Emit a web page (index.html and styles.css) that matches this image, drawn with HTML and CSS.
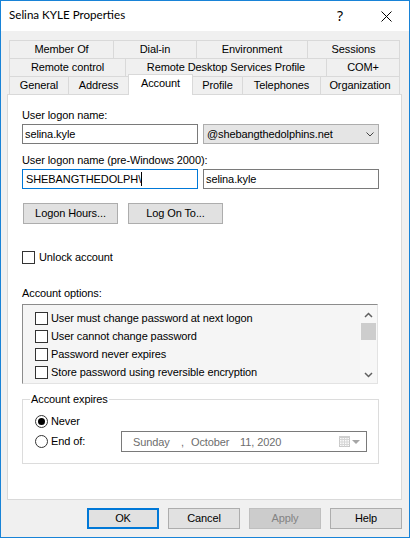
FILE: index.html
```html
<!DOCTYPE html>
<html>
<head>
<meta charset="utf-8">
<link rel="stylesheet" href="styles.css">
</head>
<body>
<div class="window">
  <div class="titlebar">
    <span class="title">Selina KYLE Properties</span>
    <span class="capbtn help-q">?</span>
    <span class="capbtn close"><svg width="11" height="11" viewBox="0 0 11 11"><path d="M0.5,0.5 L10.5,10.5 M10.5,0.5 L0.5,10.5" stroke="#000" stroke-width="1" fill="none"/></svg></span>
  </div>
  <div class="body">
    <div class="tabs">
      <div class="tabrow row1">
        <div class="tab">Member Of</div>
        <div class="tab">Dial-in</div>
        <div class="tab">Environment</div>
        <div class="tab">Sessions</div>
      </div>
      <div class="tabrow row2">
        <div class="tab">Remote control</div>
        <div class="tab">Remote Desktop Services Profile</div>
        <div class="tab">COM+</div>
      </div>
      <div class="tabrow row3">
        <div class="tab">General</div>
        <div class="tab">Address</div>
        <div class="tab active">Account</div>
        <div class="tab">Profile</div>
        <div class="tab">Telephones</div>
        <div class="tab">Organization</div>
      </div>
    </div>
    <div class="panel">
      <div class="label first">User logon name:</div>
      <div class="fieldrow">
        <div class="textbox">selina.kyle</div>
        <div class="combo"><span>@shebangthedolphins.net</span><svg width="8" height="5" viewBox="0 0 8 5"><polyline points="0.5,0.5 4,4 7.5,0.5" fill="none" stroke="#444" stroke-width="1"/></svg></div>
      </div>
      <div class="label">User logon name (pre-Windows 2000):</div>
      <div class="fieldrow">
        <div class="textbox focused">SHEBANGTHEDOLPH\<span class="caret"></span></div>
        <div class="textbox">selina.kyle</div>
      </div>
      <div class="btnrow">
        <div class="btn">Logon Hours...</div>
        <div class="btn">Log On To...</div>
      </div>
      <div class="check unlock"><span class="box"></span><span>Unlock account</span></div>
      <div class="label options">Account options:</div>
      <div class="listbox">
        <div class="items">
          <div class="item"><span class="box"></span><span>User must change password at next logon</span></div>
          <div class="item"><span class="box"></span><span>User cannot change password</span></div>
          <div class="item"><span class="box"></span><span>Password never expires</span></div>
          <div class="item"><span class="box"></span><span>Store password using reversible encryption</span></div>
        </div>
        <div class="scrollbar">
          <div class="sb-arrow up"><svg width="9" height="6" viewBox="0 0 9 6"><polyline points="1,5 4.5,1.5 8,5" fill="none" stroke="#606060" stroke-width="1.5"/></svg></div>
          <div class="sb-thumb"></div>
          <div class="sb-space"></div>
          <div class="sb-arrow down"><svg width="9" height="6" viewBox="0 0 9 6"><polyline points="1,1 4.5,4.5 8,1" fill="none" stroke="#606060" stroke-width="1.5"/></svg></div>
        </div>
      </div>
      <div class="group">
        <div class="legend">Account expires</div>
        <div class="radiorow never">
          <div class="radio"><span class="circle checked"><span class="dot"></span></span><span>Never</span></div>
        </div>
        <div class="radiorow endrow">
          <div class="radio endof"><span class="circle"></span><span>End of:</span></div>
          <div class="datepicker">
            <span class="seg sun">Sunday</span>
            <span class="seg comma">,</span>
            <span class="seg oct">October</span>
            <span class="seg">11, 2020</span>
            <svg class="cal" width="22" height="12" viewBox="0 0 22 12">
              <rect x="0.5" y="0.5" width="10" height="10" fill="#fafafa" stroke="#c8c8c8"/>
              <path d="M0.5,3.5 H10.5 M0.5,6 H10.5 M0.5,8.5 H10.5 M3,0.5 V10.5 M5.5,0.5 V10.5 M8,0.5 V10.5" stroke="#d6d6d6" stroke-width="1" fill="none"/>
              <rect x="0" y="0" width="11" height="2" fill="#cfcfcf"/>
              <polygon points="13,4 21,4 17,8" fill="#a6a6a6"/>
            </svg>
          </div>
        </div>
      </div>
    </div>
    <div class="buttons">
      <div class="dbtn ok">OK</div>
      <div class="dbtn">Cancel</div>
      <div class="dbtn apply">Apply</div>
      <div class="dbtn">Help</div>
    </div>
  </div>
</div>
</body>
</html>
```

FILE: styles.css
```css
html, body {
  margin: 0;
  padding: 0;
  background: #ffffff;
}
body {
  font-family: "Liberation Sans", Arial, sans-serif;
  font-size: 11px;
  letter-spacing: -0.1px;
  color: #000;
}
.window {
  width: 410px;
  height: 538px;
  box-sizing: border-box;
  border: 1px solid #1883d7;
  background: #f0f0f0;
  display: flex;
  flex-direction: column;
}
.titlebar {
  height: 30px;
  flex: none;
  background: #fff;
  display: flex;
  align-items: center;
}
.title {
  flex: 1;
  margin-left: 8px;
  font-family: "Lato", "Noto Sans", sans-serif;
  font-size: 11.6px;
  letter-spacing: 0;
  line-height: 16px;
  padding-bottom: 2px;
}
.capbtn {
  width: 46px;
  height: 30px;
  display: flex;
  align-items: center;
  justify-content: center;
}
.help-q {
  font-family: "Noto Sans", sans-serif;
  font-size: 14px;
  padding-bottom: 1px;
  box-sizing: border-box;
}
.close svg {
  display: block;
  margin-left: 1px;
}
.body {
  flex: 1;
  padding: 9px 7px 0 6px;
}
.tabs {
  margin: 0 2px 0 2px;
}
.tabrow {
  display: grid;
  height: 18px;
}
.row1 { grid-template-columns: 105px 83px 111px 92px; }
.row2 { grid-template-columns: 117px 201px 73px; }
.row3 { grid-template-columns: 60px 60px 64px 50px 78px 79px; }
.tab {
  border-style: solid;
  border-color: #d9d9d9;
  border-width: 1px 1px 0 0;
  text-align: center;
  line-height: 17px;
  white-space: nowrap;
  background: #f0f0f0;
}
.tab:first-child {
  border-left-width: 1px;
}
.tab.active {
  position: relative;
  z-index: 1;
  margin: -2px 0 -1px -1px;
  border-left-width: 1px;
  background: #fff;
}
.panel {
  height: 406px;
  box-sizing: border-box;
  border: 1px solid #d9d9d9;
  background: #fff;
  padding: 14px 0 0 14px;
}
.label {
  line-height: 13px;
  margin-top: 10px;
}
.label.first { margin-top: 0; }
.label.options { margin-top: 23px; }
.fieldrow {
  display: flex;
  gap: 5px;
  margin-top: 2px;
}
.textbox {
  width: 176px;
  height: 20px;
  box-sizing: border-box;
  border: 1px solid #7a7a7a;
  background: #fff;
  padding-left: 2px;
  line-height: 18px;
  white-space: nowrap;
  overflow: hidden;
}
.textbox.focused {
  border-color: #0078d7;
  padding-left: 3px;
}
.caret {
  display: inline-block;
  width: 1px;
  height: 14px;
  background: #000;
  vertical-align: -3px;
}
.combo {
  width: 176px;
  height: 20px;
  box-sizing: border-box;
  border: 1px solid #adadad;
  background: #e5e5e5;
  padding: 0 4px 0 3px;
  display: flex;
  align-items: center;
  justify-content: space-between;
}
.combo svg { display: block; }
.btnrow {
  display: flex;
  gap: 10px;
  margin-top: 14px;
  padding-left: 1px;
}
.btn {
  width: 95px;
  height: 21px;
  box-sizing: border-box;
  border: 1px solid #adadad;
  background: #e1e1e1;
  text-align: center;
  line-height: 19px;
}
.check {
  display: flex;
  align-items: center;
  gap: 4px;
  line-height: 13px;
}
.unlock { margin-top: 27px; }
.box {
  width: 13px;
  height: 13px;
  flex: none;
  box-sizing: border-box;
  border: 1px solid #333;
  background: #fff;
}
.listbox {
  margin-top: 4px;
  width: 356px;
  height: 80px;
  box-sizing: border-box;
  border: 1px solid;
  border-color: #8c8c8c #e3e3e3 #e3e3e3 #8c8c8c;
  background: #f5f5f5;
  display: flex;
}
.items {
  flex: 1;
  padding: 4px 0 0 12px;
}
.item {
  display: flex;
  align-items: center;
  gap: 3px;
  height: 18px;
  white-space: nowrap;
}
.scrollbar {
  width: 17px;
  background: #f7f7f7;
  display: flex;
  flex-direction: column;
  align-items: center;
}
.sb-arrow {
  height: 17px;
  width: 17px;
  display: flex;
  align-items: center;
  justify-content: center;
}
.sb-arrow svg { display: block; }
.sb-arrow.up { padding-top: 3px; height: 14px; }
.sb-thumb {
  width: 15px;
  height: 17px;
  margin-top: 1px;
  background: #cdcdcd;
}
.sb-space { flex: 1; }
.group {
  margin-top: 15px;
  width: 357px;
  height: 65px;
  box-sizing: border-box;
  border: 1px solid #dcdcdc;
}
.legend {
  width: fit-content;
  margin: -7px 0 0 7px;
  padding: 0 1px;
  background: #fff;
  line-height: 13px;
}
.radiorow {
  display: flex;
  align-items: center;
  padding-left: 12px;
}
.never {
  margin-top: 9px;
  height: 13px;
}
.endrow {
  margin-top: 3px;
  height: 21px;
}
.radio {
  display: flex;
  align-items: center;
  gap: 3px;
  line-height: 13px;
}
.endof { width: 86px; }
.circle {
  width: 13px;
  height: 13px;
  flex: none;
  box-sizing: border-box;
  border: 1px solid #333;
  border-radius: 50%;
  background: #fff;
  display: flex;
  align-items: center;
  justify-content: center;
}
.dot {
  width: 7px;
  height: 7px;
  border-radius: 50%;
  background: #000;
}
.datepicker {
  width: 246px;
  height: 21px;
  box-sizing: border-box;
  border: 1px solid #7a7a7a;
  background: #fff;
  display: flex;
  align-items: center;
  padding: 0 5px 0 11px;
  color: #6d6d6d;
  white-space: nowrap;
}
.seg { display: inline-block; }
.sun { width: 48px; }
.comma { width: 10px; }
.oct { width: 49px; }
.cal {
  display: block;
  margin-left: auto;
}
.buttons {
  display: flex;
  justify-content: flex-end;
  gap: 9px;
  margin-top: 8px;
}
.dbtn {
  width: 72px;
  height: 21px;
  box-sizing: border-box;
  border: 1px solid #adadad;
  background: #e1e1e1;
  text-align: center;
  line-height: 19px;
}
.dbtn.ok {
  border: 2px solid #0078d7;
  line-height: 17px;
}
.dbtn.apply {
  background: #cccccc;
  border-color: #bfbfbf;
  color: #838383;
}
```
